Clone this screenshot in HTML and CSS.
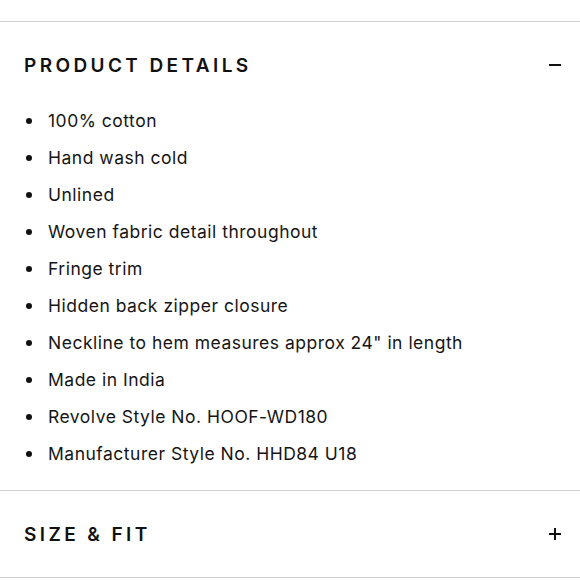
FILE: index.html
```html
<!DOCTYPE html>
<html lang="en">
<head>
<meta charset="utf-8">
<title>Product details</title>
<link rel="stylesheet" href="styles.css">
</head>
<body>
<div class="spacer"></div>
<section class="panel open">
  <div class="panel-head">
    <h2 class="panel-title">PRODUCT DETAILS</h2>
    <span class="toggle minus"></span>
  </div>
  <ul class="details">
    <li>100% cotton</li>
    <li>Hand wash cold</li>
    <li>Unlined</li>
    <li>Woven fabric detail throughout</li>
    <li>Fringe trim</li>
    <li>Hidden back zipper closure</li>
    <li>Neckline to hem measures approx 24" in length</li>
    <li>Made in India</li>
    <li>Revolve Style No. HOOF-WD180</li>
    <li>Manufacturer Style No. HHD84 U18</li>
  </ul>
</section>
<section class="panel">
  <div class="panel-head closed">
    <h2 class="panel-title">SIZE &amp; FIT</h2>
    <span class="toggle plus"></span>
  </div>
</section>
</body>
</html>
```
FILE: styles.css
```css
* { box-sizing: border-box; }
html, body { margin: 0; padding: 0; background: #fff; }
body {
  font-family: Inter, "Noto Sans", sans-serif;
  color: #111;
  width: 580px;
}
.spacer { height: 21px; }
.panel { border-top: 1px solid #cfcfcf; }
.panel:last-child { border-bottom: 1px solid #cfcfcf; }
.panel-head {
  height: 80px;
  padding: 6px 19px 0 24px;
  display: flex;
  align-items: center;
  justify-content: space-between;
}
.panel-head.closed { height: 86px; padding-top: 0; }
.panel-title {
  margin: 0;
  font-size: 19px;
  font-weight: 600;
  letter-spacing: 3.4px;
  color: #111;
}
.toggle { position: relative; width: 12px; height: 12px; display: block; }
.toggle::before {
  content: "";
  position: absolute;
  left: 0; top: 5px;
  width: 12px; height: 2px;
  background: #111;
}
.toggle.plus::after {
  content: "";
  position: absolute;
  left: 5px; top: 0;
  width: 2px; height: 12px;
  background: #111;
}
.details {
  list-style: none;
  margin: 0;
  padding: 0 0 18px 48px;
}
.details li {
  position: relative;
  height: 37px;
  line-height: 37px;
  font-size: 17.5px;
  letter-spacing: 0.5px;
  color: #151515;
}
.details li::before {
  content: "";
  position: absolute;
  left: -22px;
  top: 16px;
  width: 6px; height: 6px;
  border-radius: 50%;
  background: #111;
}
```
